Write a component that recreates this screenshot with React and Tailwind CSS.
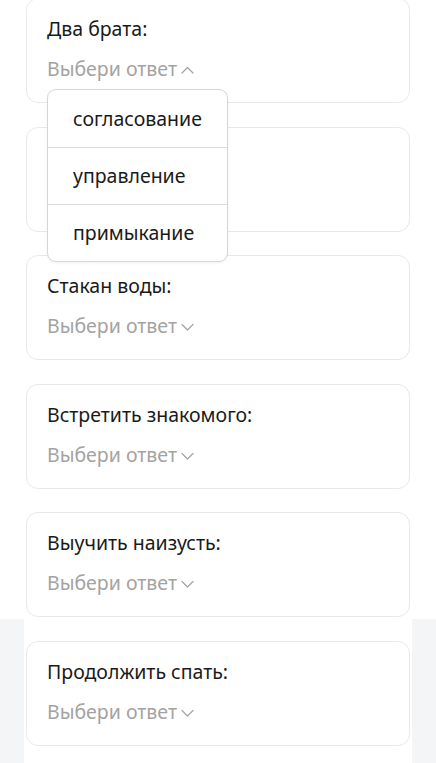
import React from 'react'

const QUESTIONS = [
  { id: 1, title: 'Два брата:', open: true },
  { id: 2, title: '' },
  { id: 3, title: 'Стакан воды:' },
  { id: 4, title: 'Встретить знакомого:' },
  { id: 5, title: 'Выучить наизусть:' },
]

const OPTIONS = ['согласование', 'управление', 'примыкание']

function Chevron({ up }) {
  return (
    <svg width="13" height="8" viewBox="0 0 13 8" fill="none" className="ml-[4px] mt-[2px]">
      <path
        d={up ? 'M1 7 L6.5 1.5 L12 7' : 'M1 1.5 L6.5 7 L12 1.5'}
        stroke="#a3a3a3"
        strokeWidth="1.2"
        strokeLinecap="round"
        strokeLinejoin="round"
      />
    </svg>
  )
}

function Dropdown() {
  return (
    <div className="absolute left-[20px] top-[90px] z-10 w-[181px] rounded-[9px] border border-[#d6d6d6] bg-white shadow-[0_1px_3px_rgba(0,0,0,0.06)]">
      {OPTIONS.map((o, i) => (
        <div
          key={o}
          className={`flex h-[57px] items-center pl-[25px] text-[19.5px] leading-[26px] text-[#1a1a1a] ${i > 0 ? 'border-t border-[#dadada]' : ''}`}
        >
          {o}
        </div>
      ))}
    </div>
  )
}

function Card({ title, open }) {
  return (
    <div className="relative h-[105px] rounded-[12px] border border-[#e9e9e9] bg-white px-[20px] pt-[17px]">
      {title && (
        <>
          <div className="text-[19.5px] leading-[26px] text-[#1a1a1a]">{title}</div>
          <div className="mt-[14px] flex items-center text-[19.5px] leading-[26px] text-[#a3a3a3]">
            <span>Выбери ответ</span>
            <Chevron up={open} />
          </div>
        </>
      )}
      {open && <Dropdown />}
    </div>
  )
}

export default function App() {
  return (
    <div className="min-h-screen bg-[#f4f5f7] font-['Noto_Sans',sans-serif]">
      <div className="bg-white">
        <div className="mx-6 flex flex-col gap-[23.5px] px-[2px] -translate-y-[2px]">
          {QUESTIONS.map((q) => (
            <Card key={q.id} title={q.title} open={q.open} />
          ))}
        </div>
      </div>
      <div className="mx-6 min-h-[150px] bg-white px-[2px] pt-[22px]">
        <Card title="Продолжить спать:" />
      </div>
    </div>
  )
}
